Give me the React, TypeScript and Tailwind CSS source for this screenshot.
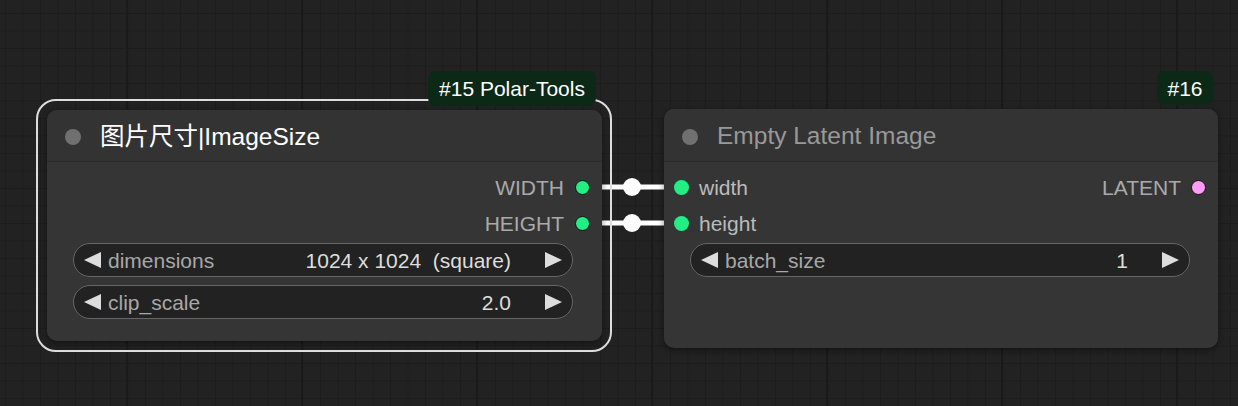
import React from "react";

function LeftArrow() {
  return (
    <svg width="17" height="16" viewBox="0 0 17 16" className="shrink-0">
      <polygon points="17,0 17,16 0,8" fill="#dddddd" />
    </svg>
  );
}

function RightArrow() {
  return (
    <svg width="17" height="16" viewBox="0 0 17 16" className="shrink-0">
      <polygon points="0,0 0,16 17,8" fill="#dddddd" />
    </svg>
  );
}

function Widget({ label, value }: { label: string; value: string }) {
  return (
    <div className="ml-[26px] w-[500px] h-[34px] rounded-full border border-[#666666] bg-[#222222] flex items-center pl-[10px] pr-[10px]">
      <LeftArrow />
      <span className="ml-[7px] text-[21px] text-[#a8a8a8] leading-none">{label}</span>
      <span className="ml-auto text-[21px] text-[#dddddd] leading-none whitespace-pre">{value}</span>
      <span className="ml-[34px] flex items-center">
        <RightArrow />
      </span>
    </div>
  );
}

function OutDot({ color }: { color: string }) {
  return <span className={`w-[15px] h-[15px] rounded-full border border-[#111111] ${color}`} />;
}

function InDot() {
  return <span className="w-[15px] h-[15px] rounded-full bg-[#22ee84]" />;
}

export default function App() {
  return (
    <div className="relative w-[1238px] h-[406px] overflow-hidden bg-[#222222] bg-[linear-gradient(to_right,#1a1a1a_2px,transparent_2px),linear-gradient(to_bottom,#1c1c1c_1px,transparent_1px),linear-gradient(to_right,#1d1d1d_1px,transparent_1px),linear-gradient(to_bottom,#1d1d1d_1px,transparent_1px)] bg-[size:175px_175px,175px_175px,17.5px_17.5px,17.5px_17.5px] bg-[position:126px_0px,0px_188px,5px_0px,0px_13px] font-['Liberation_Sans','Noto_Sans_CJK_SC',sans-serif]">
      {/* links */}
      <svg className="absolute left-0 top-0" width="1238" height="406">
        <line x1="583" y1="187" x2="681" y2="187" stroke="#ffffff" strokeWidth="5" />
        <line x1="583" y1="223" x2="681" y2="223" stroke="#ffffff" strokeWidth="5" />
        <circle cx="632" cy="187" r="9" fill="#ffffff" />
        <circle cx="632" cy="223" r="9" fill="#ffffff" />
      </svg>

      {/* selection outline */}
      <div className="absolute left-[36px] top-[99px] w-[576px] h-[253px] rounded-[20px] border-2 border-[#dddddd]" />

      {/* Node 15 */}
      <div className="absolute left-[47px] top-[110px] w-[555px] h-[231px] rounded-[10px] bg-[#353535] shadow-[0_2px_6px_rgba(0,0,0,0.45)] flex flex-col">
        <div className="h-[52px] pt-[3px] border-b border-[#2a2a2a] rounded-t-[10px] bg-[#333333] flex items-center shrink-0">
          <span className="ml-[18px] w-[16px] h-[16px] rounded-full bg-[#707070]" />
          <span className="ml-[19px] text-[24.5px] text-white leading-none">图片尺寸|ImageSize</span>
        </div>
        <div className="pt-[7px] flex flex-col">
          <div className="h-[36px] flex items-center justify-end pr-[12px] gap-[11px]">
            <span className="text-[21px] text-[#aaaaaa] leading-none">WIDTH</span>
            <OutDot color="bg-[#22ee84]" />
          </div>
          <div className="h-[36px] flex items-center justify-end pr-[12px] gap-[11px]">
            <span className="text-[21px] text-[#aaaaaa] leading-none">HEIGHT</span>
            <OutDot color="bg-[#22ee84]" />
          </div>
          <div className="mt-[2px] flex flex-col gap-[8px]">
            <Widget label="dimensions" value="1024 x 1024  (square)" />
            <Widget label="clip_scale" value="2.0" />
          </div>
        </div>
      </div>

      {/* Node 16 */}
      <div className="absolute left-[664px] top-[109px] w-[554px] h-[239px] rounded-[10px] bg-[#353535] shadow-[0_2px_6px_rgba(0,0,0,0.45)] flex flex-col">
        <div className="h-[53px] pt-[3px] border-b border-[#2a2a2a] rounded-t-[10px] bg-[#333333] flex items-center shrink-0">
          <span className="ml-[18px] w-[16px] h-[16px] rounded-full bg-[#707070]" />
          <span className="ml-[19px] text-[24.5px] text-[#999999] leading-none">Empty Latent Image</span>
        </div>
        <div className="pt-[7px] flex flex-col">
          <div className="h-[36px] flex items-center pl-[10px] pr-[12px]">
            <InDot />
            <span className="ml-[10px] text-[21px] text-[#bbbbbb] leading-none">width</span>
            <span className="ml-auto text-[21px] text-[#aaaaaa] leading-none">LATENT</span>
            <span className="ml-[10px] flex">
              <OutDot color="bg-[#ff9cf6]" />
            </span>
          </div>
          <div className="h-[36px] flex items-center pl-[10px] pr-[12px]">
            <InDot />
            <span className="ml-[10px] text-[21px] text-[#bbbbbb] leading-none">height</span>
          </div>
          <div className="mt-[2px] flex flex-col gap-[8px]">
            <Widget label="batch_size" value="1" />
          </div>
        </div>
      </div>

      {/* badges */}
      <div className="absolute left-[428px] top-[71px] w-[168px] h-[35px] rounded-[8px] bg-[#0c2817] flex items-center justify-center text-[21px] text-white leading-none">
        #15 Polar-Tools
      </div>
      <div className="absolute left-[1157px] top-[71px] w-[56px] h-[34px] rounded-[8px] bg-[#0c2817] flex items-center justify-center text-[21px] text-white leading-none">
        #16
      </div>
    </div>
  );
}
